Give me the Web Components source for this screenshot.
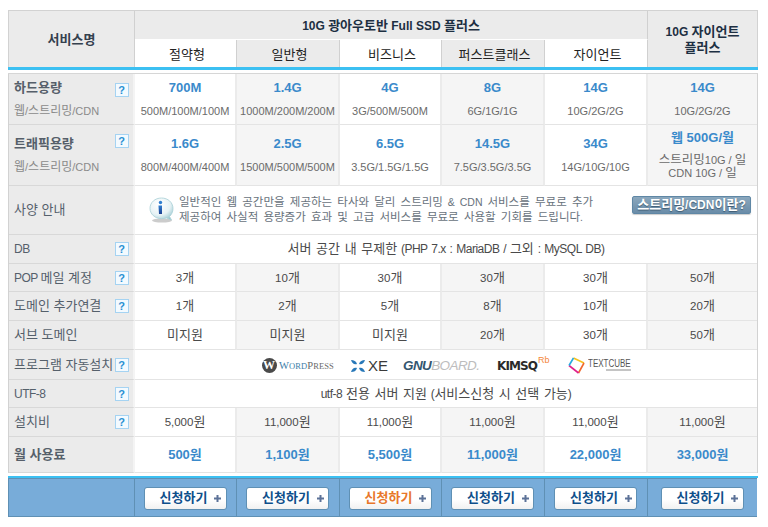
<!DOCTYPE html>
<html lang="ko"><head><meta charset="utf-8"><title>서비스</title>
<style>
html,body{margin:0;background:#fff}
body{font:11px/14px "Liberation Sans","Noto Sans CJK KR",sans-serif;color:#444}
</style></head><body>
<plan-table>
  <plan-head></plan-head>

  <spec-row h="51" first>
    <spec-label help sub="웹/스트리밍/CDN" strong>하드용량</spec-label>
    <spec-cell big sub="500M/100M/100M">700M</spec-cell>
    <spec-cell alt big sub="1000M/200M/200M">1.4G</spec-cell>
    <spec-cell big sub="3G/500M/500M">4G</spec-cell>
    <spec-cell alt big sub="6G/1G/1G">8G</spec-cell>
    <spec-cell big sub="10G/2G/2G">14G</spec-cell>
    <spec-cell alt last big sub="10G/2G/2G">14G</spec-cell>
  </spec-row>
  <spec-row h="61">
    <spec-label help sub="웹/스트리밍/CDN" strong>트래픽용량</spec-label>
    <spec-cell big sub="800M/400M/400M">1.6G</spec-cell>
    <spec-cell alt big sub="1500M/500M/500M">2.5G</spec-cell>
    <spec-cell big sub="3.5G/1.5G/1.5G">6.5G</spec-cell>
    <spec-cell alt big sub="7.5G/3.5G/3.5G">14.5G</spec-cell>
    <spec-cell big sub="14G/10G/10G">34G</spec-cell>
    <spec-cell alt last big tall sub="스트리밍10G / 일|CDN 10G / 일">웹 500G/월</spec-cell>
  </spec-row>
  <spec-row h="49">
    <spec-label>사양 안내</spec-label>
    <info-cell></info-cell>
  </spec-row>
  <spec-row h="29">
    <spec-label help>DB</spec-label>
    <spec-cell span="6" last>서버 공간 내 무제한 (PHP 7.x : MariaDB / 그외 : MySQL DB)</spec-cell>
  </spec-row>
  <spec-row h="28">
    <spec-label help>POP 메일 계정</spec-label>
    <spec-cell>3개</spec-cell><spec-cell alt>10개</spec-cell><spec-cell>30개</spec-cell><spec-cell alt>30개</spec-cell><spec-cell>30개</spec-cell><spec-cell alt last>50개</spec-cell>
  </spec-row>
  <spec-row h="29">
    <spec-label help>도메인 추가연결</spec-label>
    <spec-cell>1개</spec-cell><spec-cell alt>2개</spec-cell><spec-cell>5개</spec-cell><spec-cell alt>8개</spec-cell><spec-cell>10개</spec-cell><spec-cell alt last>20개</spec-cell>
  </spec-row>
  <spec-row h="29">
    <spec-label>서브 도메인</spec-label>
    <spec-cell>미지원</spec-cell><spec-cell alt>미지원</spec-cell><spec-cell>미지원</spec-cell><spec-cell alt>20개</spec-cell><spec-cell>30개</spec-cell><spec-cell alt last>50개</spec-cell>
  </spec-row>
  <spec-row h="30">
    <spec-label help>프로그램 자동설치</spec-label>
    <logo-strip></logo-strip>
  </spec-row>
  <spec-row h="28">
    <spec-label help>UTF-8</spec-label>
    <spec-cell span="6" last>utf-8 전용 서버 지원 (서비스신청 시 선택 가능)</spec-cell>
  </spec-row>
  <spec-row h="29">
    <spec-label help>설치비</spec-label>
    <spec-cell>5,000원</spec-cell><spec-cell alt>11,000원</spec-cell><spec-cell>11,000원</spec-cell><spec-cell alt>11,000원</spec-cell><spec-cell>11,000원</spec-cell><spec-cell alt last>11,000원</spec-cell>
  </spec-row>
  <spec-row h="36">
    <spec-label strong>월 사용료</spec-label>
    <spec-cell big>500원</spec-cell><spec-cell alt big>1,100원</spec-cell><spec-cell big>5,500원</spec-cell><spec-cell alt big>11,000원</spec-cell><spec-cell big>22,000원</spec-cell><spec-cell alt last big>33,000원</spec-cell>
  </spec-row>

  <plan-foot>
    <foot-cell></foot-cell>
    <foot-cell><apply-btn></apply-btn></foot-cell>
    <foot-cell><apply-btn></apply-btn></foot-cell>
    <foot-cell><apply-btn hot></apply-btn></foot-cell>
    <foot-cell><apply-btn></apply-btn></foot-cell>
    <foot-cell><apply-btn></apply-btn></foot-cell>
    <foot-cell last><apply-btn></apply-btn></foot-cell>
  </plan-foot>
</plan-table>

<script>
const COLS = '126px 102px 103px 102px 103px 103px 109px';
const mk = (css, html) => `<style>${css}</style>${html}`;
const ko = s => s.replace(/[\uAC00-\uD7A3]+(?: [\uAC00-\uD7A3]+)*/g, m => `<ko-t>${m}</ko-t>`);

class Base extends HTMLElement {
  render(css, html) { if (!this.shadowRoot) this.attachShadow({mode:'open'}); this.shadowRoot.innerHTML = mk(css, html); }
}
class KoT extends Base { constructor(){ super(); this.render(':host{font-size:var(--ko,13px);letter-spacing:0}','<slot></slot>'); } }
customElements.define('ko-t', KoT);

class PlanTable extends Base {
  connectedCallback(){ this.render(':host{display:block;width:750px;margin:10px 0 0 8px}','<slot></slot>'); }
}
customElements.define('plan-table', PlanTable);

class PlanHead extends Base {
  connectedCallback(){
    this.render(`
      :host{display:block;--ko:13px}
      .g{display:grid;grid-template-columns:${COLS};grid-template-rows:29px 28px;box-sizing:border-box;
         border:1px solid #d2d2d2;border-width:1px 1px 0 1px;background:#ebebeb;color:#1d2f42;line-height:16px}
      .g>div{display:flex;align-items:center;justify-content:center;text-align:center;border-right:1px solid #d0d0d0;box-sizing:border-box}
      .a{grid-row:1/3;font-weight:bold;color:#34404e}
      .t{grid-column:2/7;font-weight:bold;font-size:12px;border-bottom:1px solid #fff;padding-top:1px}
      .z{grid-column:7;grid-row:1/3;font-weight:bold;font-size:12px;border-right:0!important}
      .c{background:#fff;border-bottom:0;color:#222;padding:1px 0 0 3px}
      .c.alt{background:#ebebeb}
      .line{height:3px;background:#3cc0f2;margin-top:-1px;position:relative}
      .gap{height:3px;background:#fff}
      .r{height:1px;background:#d6d6d6}
      `,`<div class="g">
        <div class="a">${ko('서비스명')}</div>
        <div class="t"><span>${ko('10G 광아우토반 Full SSD 플러스')}</span></div>
        <div class="z"><span>${ko('10G 자이언트')}<br>${ko('플러스')}</span></div>
        <div class="c">${ko('절약형')}</div><div class="c alt">${ko('일반형')}</div><div class="c">${ko('비즈니스')}</div>
        <div class="c alt">${ko('퍼스트클래스')}</div><div class="c">${ko('자이언트')}</div>
      </div><div class="line"></div><div class="gap"></div><div class="r"></div>`);
  }
}
customElements.define('plan-head', PlanHead);

class SpecRow extends Base {
  connectedCallback(){
    this.render(`:host{display:grid;grid-template-columns:${COLS};box-sizing:border-box;height:${this.getAttribute('h')}px;
      border:1px solid #d2d2d2;border-width:0 1px}`,'<slot></slot>');
  }
}
customElements.define('spec-row', SpecRow);

class SpecLabel extends Base {
  connectedCallback(){
    const title = this.innerHTML, sub = this.getAttribute('sub');
    const strong = this.hasAttribute('strong');
    const help = this.hasAttribute('help');
    this.innerHTML = '';
    this.render(`
      :host{display:flex;flex-direction:column;justify-content:center;position:relative;box-sizing:border-box;
        padding-left:5px;background:#ebebeb;border-right:2px solid #f4f4f4;border-bottom:1px solid #d8d8d8;color:#55606b;font-size:12px;letter-spacing:-.5px;line-height:16px;white-space:nowrap}
      .m{${strong?'font-weight:bold;color:#565f6a;':''}}
      .s{color:#8a8a8a;margin-top:7px;--ko:12px;font-size:11px;letter-spacing:0}
      .q{position:absolute;left:105.5px;top:50%;margin-top:-7px;width:14px;height:14px;box-sizing:border-box;border:1px solid #a5d3f2;background:#f3faff;letter-spacing:0;
        color:#2a90d2;font:bold 11px/12px "Liberation Sans",sans-serif;text-align:center}
      :host([sub]) .q{top:9px;margin-top:0}
      `,`<div class="m">${ko(title)}</div>${sub?`<div class="s">${ko(sub)}</div>`:''}${help?'<div class="q">?</div>':''}`);
  }
}
customElements.define('spec-label', SpecLabel);

class SpecCell extends Base {
  connectedCallback(){
    const t = this.innerHTML, sub = this.getAttribute('sub');
    const big = this.hasAttribute('big'), tall = this.hasAttribute('tall');
    const span = this.getAttribute('span');
    this.innerHTML = '';
    this.render(`
      :host{display:flex;flex-direction:column;justify-content:center;align-items:center;text-align:center;box-sizing:border-box;min-width:0;
        background:#fff;border-right:2px solid #ebebeb;border-bottom:1px solid #e4e4e4;color:#4a4a4a;font-size:11.5px;line-height:16px;white-space:nowrap;${span?`grid-column:span ${span};font-size:12px;letter-spacing:-.5px;word-spacing:1px;`:''}}
      :host([alt]){background:#f5f5f5}
      :host([last]){border-right:0}
      .v{${big?'font-weight:bold;color:#3a8acb;font-size:13px;':''}}
      .s{color:#6b6b6b;font-size:11px;--ko:12.5px;line-height:${tall?13:16}px;margin-top:${tall?8:7}px}
      `,`<div class="v">${ko(t)}</div>${sub?`<div class="s">${sub.split('|').map(ko).join('<br>')}</div>`:''}`);
  }
}
customElements.define('spec-cell', SpecCell);

class InfoCell extends Base {
  connectedCallback(){
    this.render(`
      :host{grid-column:span 6;display:flex;align-items:center;box-sizing:border-box;padding:0 6px 0 14px;background:#fff;border-bottom:1px solid #e4e4e4}
      svg{flex:none;width:25px;height:26px;margin-right:5px}
      .t{flex:1;color:#68727c;font-size:10.5px;--ko:11.5px;line-height:14.5px;white-space:nowrap;word-spacing:2px;margin-top:-1px}
      .b{flex:none;width:119px;height:18px;box-sizing:border-box;border:1px solid #5f87a5;border-radius:2px;background:linear-gradient(#8aa7bd,#6a8ca8);
         box-shadow:0 1px 1px #ccc;color:#fff;font-weight:bold;font-size:12px;line-height:15px;text-align:center;text-shadow:0 1px 1px #3e5a70;margin-top:-11px;white-space:nowrap}
      `,`<svg viewBox="0 0 25 26">
        <defs><radialGradient id="o" cx=".4" cy=".3" r=".8"><stop offset="0" stop-color="#fff"/><stop offset=".6" stop-color="#e6f2f5"/><stop offset="1" stop-color="#8fc2cc"/></radialGradient>
        <linearGradient id="i" x1="0" y1="0" x2="0" y2="1"><stop offset="0" stop-color="#2f7fd0"/><stop offset="1" stop-color="#1c3f90"/></linearGradient></defs>
        <ellipse cx="13" cy="23.5" rx="10" ry="2" fill="#ccc"/>
        <path d="M12.5 1C19 1 24 5.5 24 11.5c0 3.5-1.5 6-3.5 8l2 3.5-5-2c-1.5.5-3 .7-5 .7C6 21.700 1 17 1 11.300 1 5.500 6 1 12.500 1z" fill="url(#o)" stroke="#a8cfd6" stroke-width=".8"/>
        <circle cx="11.500" cy="5.500" r="1.700" fill="#2f7fd0"/>
        <path d="M9.500 8.500h3.500v8.500h-3z" fill="url(#i)"/>
      </svg>
      <div class="t">${ko('일반적인 웹 공간만을 제공하는 타사와 달리 스트리밍 & CDN 서비스를 무료로 추가')}<br>${ko('제공하여 사실적 용량증가 효과 및 고급 서비스를 무료로 사용할 기회를 드립니다.')}</div>
      <div class="b">${ko('스트리밍/CDN이란?')}</div>`);
  }
}
customElements.define('info-cell', InfoCell);

class LogoStrip extends Base {
  connectedCallback(){
    this.render(`
      :host{grid-column:span 6;display:block;box-sizing:border-box;background:#fff;border-bottom:1px solid #e4e4e4;padding:7px 0 0 126.5px}
      .w{display:flex;align-items:center;height:17px}
      .wp{display:flex;align-items:center;width:89.5px}
      .wc{width:15px;height:15px;border-radius:50%;background:#4a4a4a;color:#fff;font:bold 12px/15px "Liberation Serif",serif;text-align:center;flex:none}
      .wt{margin-left:2.5px;font:10.5px/12px "Liberation Serif",serif;color:#6a6a6a;letter-spacing:.1px;white-space:nowrap}
      .wt i{font-style:normal;color:#3b7ea8}.wt small{font-size:8.5px}
      .xe{display:flex;align-items:center;width:52px}
      .xe svg{width:14px;height:14px;flex:none}
      .xe span{margin-left:3px;font:15px/16px "Liberation Sans",sans-serif;color:#3a3a3a}
      .gn{width:94px;font:italic bold 13.5px/16px "Liberation Sans",sans-serif;color:#33566f;white-space:nowrap;letter-spacing:-.6px}
      .gn em{font-weight:normal;color:#bdbdbd}
      .km{width:71px;display:flex;align-items:flex-start;font:bold 12px/16px "DejaVu Sans",sans-serif;color:#2a2a2a;letter-spacing:-.9px;white-space:nowrap}
      .km sup{font:9px/9px "Liberation Sans",sans-serif;color:#f4873a;margin:-2px 0 0 1px;letter-spacing:0}
      .tc{display:flex;align-items:center}
      .tc svg{width:17px;height:17px;flex:none}
      .tb{margin-left:3px;width:43px;display:flex;flex-direction:column;margin-top:-1px}
      .tb span{font:10px/9px "Liberation Sans",sans-serif;color:#555;white-space:nowrap;transform:scaleX(.8);transform-origin:0 50%}
      .tb b{height:2px;width:25px;margin-left:18px;background:#c4c4c4;margin-top:1px;display:block}
      `,`<div class="w">
        <div class="wp"><div class="wc">W</div><div class="wt"><i>W<small>ORD</small></i>P<small>RESS</small></div></div>
        <div class="xe"><svg viewBox="0 0 14 14"><path d="M0 1c3 0 5 1 6 4-3 1-5-1-6-4zM14 1c-3 0-5 1-6 4 3 1 5-1 6-4zM0 13c3 0 5-1 6-4-3-1-5 1-6 4zM14 13c-3 0-5-1-6-4 3-1 5 1 6 4z" fill="#2878b8"/></svg><span>XE</span></div>
        <div class="gn">GNU<em>BOARD.</em></div>
        <div class="km"><span>KIMSQ</span><sup>Rb</sup></div>
        <div class="tc"><svg viewBox="0 0 17 17" fill="none" stroke-width="1.6"><path d="M5.5 1L16 6" stroke="#f7c21c"/><path d="M16 6L10.500 16" stroke="#f0682c"/><path d="M10.500 16L1 8.500" stroke="#e0208c"/><path d="M1 8.500L5.500 1" stroke="#27a8e0"/></svg>
        <div class="tb"><span>TEXTCUBE</span><b></b></div></div>
      </div>`);
  }
}
customElements.define('logo-strip', LogoStrip);

class PlanFoot extends Base {
  connectedCallback(){
    this.render(`:host{display:block}
      .gap{height:3px;background:#fff}.line{height:2px;background:#3cc0f2}
      .g{display:grid;grid-template-columns:${COLS};height:39px;box-sizing:border-box;background:#78acd9;border:1px solid #5f90b4;border-width:1px 0 1px 1px;width:749px}`,
      '<div class="gap"></div><div class="line"></div><div class="g"><slot></slot></div>');
  }
}
customElements.define('plan-foot', PlanFoot);

class FootCell extends Base {
  connectedCallback(){
    this.render(`:host{display:flex;align-items:center;justify-content:center;box-sizing:border-box;border-right:1px solid #5f90b4;padding-top:1px}
      :host([last]){border-right:0}`,'<slot></slot>');
  }
}
customElements.define('foot-cell', FootCell);

class ApplyBtn extends Base {
  connectedCallback(){
    this.render(`
      :host{display:flex;align-items:center;width:83px;height:23px;box-sizing:border-box;padding:0 0 0 15px;border:1px solid #5f90b4;border-radius:3px;
        background:linear-gradient(#fff 55%,#f1f1f1);color:#0e4f8b;font-weight:bold;font-size:13px;line-height:16px;white-space:nowrap;margin-right:1px}
      :host([hot]){color:#e8772a}
      svg{width:7px;height:7px;margin-left:7px;flex:none}
      `,`${ko('신청하기')}<svg viewBox="0 0 7 7"><path d="M2.500 0h2v2.500H7v2H4.500V7h-2V4.500H0v-2h2.500z" fill="#5c7298"/></svg>`);
  }
}
customElements.define('apply-btn', ApplyBtn);
</script>
</body></html>
